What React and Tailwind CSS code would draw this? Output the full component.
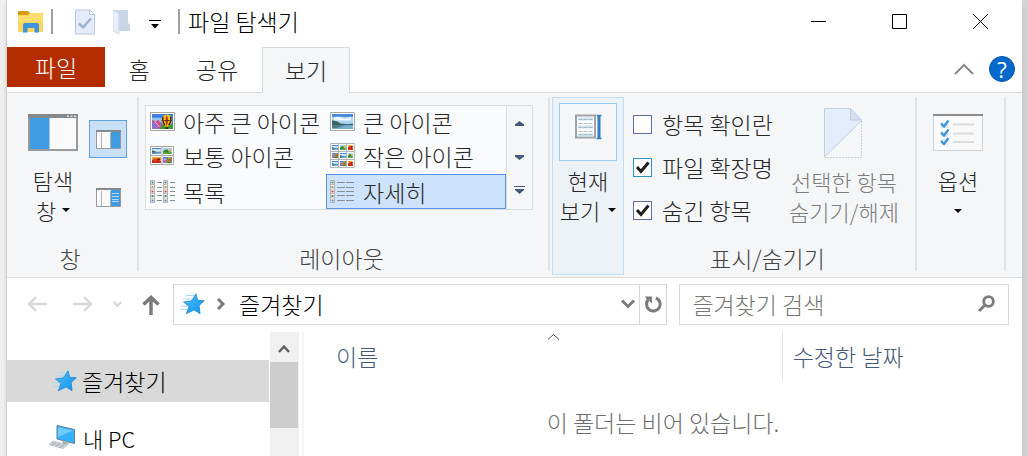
import { useState } from 'react'

const FolderIcon = () => (
  <svg width="25" height="22" viewBox="0 0 25 22">
    <path d="M0 1q0-1 1-1h9l2 2v3H0z" fill="#d99a0b" />
    <path d="M0 4h10l2-2h12q1 0 1 1v17q0 1-1 1H1q-1 0-1-1z" fill="#ffd55c" />
    <path d="M12 2h12q1 0 1 1v8H0V5h10z" fill="#ffdc70" />
    <path d="M5 21.500V14q0-2 2-2h12q2 0 2 2v7.500h-4.500V17h-7v4.500z" fill="#3b94dd" />
  </svg>
)

const PropertiesIcon = () => (
  <svg width="20" height="26" viewBox="0 0 20 26">
    <path d="M.5 1h14l5 4.500v19.500H.5z" fill="#e3ecf8" stroke="#b9c8de" />
    <path d="M14.500 1v4.500h5z" fill="#fff" stroke="#b9c8de" />
    <path d="M4 14.500l4 4 8-9" fill="none" stroke="#9fb1cd" strokeWidth="2.500" />
  </svg>
)

const NewFolderIcon = () => (
  <svg width="17" height="25" viewBox="0 0 17 25">
    <path d="M0 1h15v13l2 2v6H5z" fill="#c9d6e8" />
    <path d="M0 1l6 3v21l-6-3z" fill="#e6eef9" stroke="#c3d1e4" strokeWidth=".6" />
  </svg>
)

const Caret = ({ className = '' }) => (
  <svg className={className} width="8" height="4" viewBox="0 0 8 4" fill="currentColor">
    <path d="M0 0h8L4 4z" />
  </svg>
)

const ScrollCaret = ({ className = '' }) => (
  <svg className={className} width="9" height="5" viewBox="0 0 9 5" fill="currentColor">
    <path d="M0 0h9v1.500L4.500 5 0 1.500z" />
  </svg>
)

const PaneIcon = () => (
  <svg width="50" height="37" viewBox="0 0 50 37">
    <path d="M1 1h48v35H1z" fill="#fafafa" stroke="#989b9e" strokeWidth="2" />
    <path d="M0 0h50v4H0z" fill="#85898b" />
    <path d="M39 1.500h2v1.500h-2zM42.500 1.500h2v1.500h-2zM46 1.500h2v1.500h-2z" fill="#ddd" />
    <path d="M2 4h19v31H2z" fill="#3f9be2" />
    <path d="M21 4h1v31h-1z" fill="#9fcbee" />
  </svg>
)

const SmallPaneIcon = ({ lines }) => (
  <svg width="25" height="19" viewBox="0 0 25 19">
    <path d="M.5.5h24v18H.5z" fill="#fafafa" stroke="#989b9e" />
    <path d="M0 0h25v2H0z" fill="#85898b" />
    <path d="M5.500 3v15M14.500 3v15" stroke="#b0b2b4" />
    <path d="M15 2h9v16h-9z" fill="#3f9be2" />
    {lines && <path d="M16 5.500h7M16 8.500h7M16 11.500h7M16 13.500h7" stroke="#b3d8f6" />}
  </svg>
)

const Landscape = ({ x = 0, y = 0, w, h }) => (
  <svg x={x} y={y} width={w} height={h} viewBox="0 0 22 16" preserveAspectRatio="none">
    <path d="M0 0h22v16H0z" fill="#4787dc" />
    <path d="M0 3h22v8H0z" fill="#a8d3f3" />
    <path d="M2 4q4-2 8 0t10-1v4H2z" fill="#eef8fd" />
    <path d="M0 7q4-1 9 3l8 1 5-1v2H0z" fill="#3a665f" />
    <path d="M0 12h22v4H0z" fill="#78b0cc" />
    <path d="M0 12h14l-9 3H0z" fill="#4a7b86" />
  </svg>
)

const Balloon = ({ x = 0, y = 0, w, h }) => (
  <svg x={x} y={y} width={w} height={h} viewBox="0 0 22 16" preserveAspectRatio="none">
    <path d="M0 0h22v16H0z" fill="#3f7fe4" />
    <path d="M0 4h11v5H0z" fill="#8fc6f6" />
    <path d="M0 16V6l4 2 3-2 5 10z" fill="#d6507d" />
    <path d="M0 9l3-1 5 8H0z" fill="#8f6fd0" />
    <path d="M3 8l5 6" stroke="#f2b0b8" />
    <path d="M7 16l4-4 11-1v5z" fill="#3f9b34" />
    <ellipse cx="15.500" cy="7" rx="5.500" ry="6.500" fill="#f5c510" />
    <path d="M15.500 1q-2.500 6 0 12q2.500-6 0-12z" fill="#c62a18" />
    <path d="M11.500 3q-1 5 2 9M19.500 3q1 5-2 9" fill="none" stroke="#3b2416" strokeWidth="1.500" />
    <path d="M10 7h11" stroke="#6b3417" />
    <path d="M14 14h3v2h-3z" fill="#4b2b12" />
  </svg>
)

const Flowers = ({ x, y, w, h, red }) => (
  <svg x={x} y={y} width={w} height={h} viewBox="0 0 8 8" preserveAspectRatio="none">
    <path d="M0 0h8v8H0z" fill={red ? '#f0a63c' : '#a9d6ef'} />
    <path d="M0 4l4-2 4 4v2H0z" fill={red ? '#c92b17' : '#5aa646'} />
    <circle cx="3" cy="4" r="2" fill={red ? '#e23b1e' : '#2f7f3a'} />
    <circle cx="6" cy="3" r="1.500" fill={red ? '#8c1b12' : '#f0b53a'} />
  </svg>
)

const HugeIcon = () => (
  <svg width="25" height="25" viewBox="0 0 25 25">
    <path d="M.5 3.500h24v18H.5z" fill="#fff" stroke="#a6a6a6" />
    <Balloon x={2} y={5} w={21} h={15} />
  </svg>
)

const LargeIcon = () => (
  <svg width="25" height="25" viewBox="0 0 25 25">
    <path d="M.5 3.500h24v18H.5z" fill="#fff" stroke="#a6a6a6" />
    <Landscape x={2} y={5} w={21} h={15} />
  </svg>
)

const MediumIcon = () => (
  <svg width="25" height="25" viewBox="0 0 25 25">
    <path d="M.5 3.500h23v18H.5z" fill="#fff" stroke="#a6a6a6" />
    <path d="M12 3v19M0 12.500h24" stroke="#a6a6a6" />
    <Landscape x={2} y={5} w={9} h={6} />
    <Flowers x={13} y={5} w={9} h={6} />
    <Flowers x={2} y={14} w={9} h={6} red />
    <Balloon x={13} y={14} w={9} h={6} />
  </svg>
)

const SmallIcon = () => (
  <svg width="25" height="25" viewBox="0 0 25 25">
    <path d="M.5.5h24v24H.5z" fill="#fff" stroke="#b5b5b5" />
    <path d="M8.500 0v25M16.500 0v25M0 8.500h25M0 16.500h25" stroke="#b5b5b5" />
    <Landscape x={2} y={2} w={6} h={5} />
    <Flowers x={10} y={2} w={6} h={5} />
    <Flowers x={18} y={2} w={5} h={5} red />
    <Balloon x={2} y={10} w={6} h={5} />
    <Landscape x={10} y={10} w={6} h={5} />
    <Flowers x={18} y={10} w={5} h={5} />
    <Landscape x={2} y={18} w={6} h={5} />
    <Balloon x={10} y={18} w={6} h={5} />
    <Flowers x={18} y={18} w={5} h={5} red />
  </svg>
)

const DOTS = ['#3d9070', '#b59a5a', '#d24a35', '#5b8a72', '#4a7fc0']

const FileStrip = ({ x }) => (
  <g>
    <path d={`M${x + 0.5} .5h4v22h-4z`} fill="#fff" stroke="#b0b0b0" />
    {DOTS.map((color, i) => (
      <g key={color}>
        <rect x={x + 1.5} y={1.5 + i * 4.5} width="2" height="2" fill={color} />
        <path d={`M${x} ${4.5 + i * 4.5}h5`} stroke="#b8b8b8" />
      </g>
    ))}
  </g>
)

const ListIcon = () => (
  <svg width="25" height="23" viewBox="0 0 25 23">
    <FileStrip x={0} />
    <FileStrip x={13} />
    <path
      d="M7 2.500h5M7 7.500h5M7 11.500h5M7 15.500h5M7 20.500h5M20 2.500h5M20 7.500h5M20 11.500h5M20 15.500h5M20 20.500h5"
      stroke="#8d8d8d"
    />
  </svg>
)

const DetailsIcon = () => (
  <svg width="25" height="23" viewBox="0 0 25 23">
    <FileStrip x={0} />
    <path
      d="M7 2.500h8M7 7.500h8M7 11.500h8M7 15.500h8M7 20.500h8M16 2.500h8M16 7.500h8M16 11.500h8M16 15.500h8M16 20.500h8"
      stroke="#87919e"
    />
  </svg>
)

const CurrentViewIcon = () => (
  <svg width="27" height="26" viewBox="0 0 27 26">
    <path d="M1 1.500h19v22H1z" fill="#fff" stroke="#a0a3a5" strokeWidth="2" />
    <path d="M3 5h15M3 13h15M3 21h15" stroke="#c4e4f3" strokeWidth="3" />
    <path
      d="M3.500 5.500h14M3.500 9.500h14M3.500 13.500h14M3.500 17.500h14M3.500 20.500h14"
      stroke="#b3babe"
      strokeDasharray="4 1"
    />
    <path d="M24 2v22" stroke="#2f80c3" strokeWidth="3" />
    <path d="M21.500 1.500h5M21.500 24.500h5" stroke="#2f80c3" strokeWidth="1.500" />
  </svg>
)

const HideIcon = () => (
  <svg width="39" height="50" viewBox="0 0 39 50">
    <path d="M.5 49V.5h26l11 12z" fill="#e3edfb" stroke="#c2cfdf" />
    <path d="M26.500.5v11.500h11z" fill="#d3e0f0" stroke="#c2cfdf" />
    <path d="M37.500 13v36.500H1" fill="none" stroke="#cdcfd1" strokeDasharray="2 1" />
  </svg>
)

const OptionsIcon = () => (
  <svg width="50" height="37" viewBox="0 0 50 37">
    <path d="M.5.5h49v36H.5z" fill="#fafafa" stroke="#cfd1d3" />
    <path d="M0 0h50v2H0z" fill="#8b8e90" />
    <path d="M8 8h7v6H8zM8 17h7v6H8zM8 25h7v6H8z" fill="#e9e9e9" />
    <path d="M20 10.500h21M20 19.500h21M20 28h21" stroke="#dcdcdc" strokeWidth="2" />
    <path d="M8 9.500l3 3 4.500-6M8 18.500l3 3 4.500-6M8 27l3 3 4.500-6" fill="none" stroke="#3795e3" strokeWidth="2.200" />
  </svg>
)

const StarIcon = () => (
  <svg className="shrink-0" width="25" height="22" viewBox="0 0 25 22">
    <defs>
      <linearGradient id="star" x1="0" y1="0" x2="1" y2="1">
        <stop offset="0" stopColor="#55c3ff" />
        <stop offset="1" stopColor="#0c8fe6" />
      </linearGradient>
    </defs>
    <path d="M6 2.500h9M3 6h9M1 13h8M0 16.500h7" stroke="#a9dbf9" />
    <path
      d="M16 .8l1.800 6.500 6.500.4-5.200 4.800 1 8.200-6-3.700-7.800 3.700 2.700-7.300L3.500 9l8-1.200z"
      fill="url(#star)"
      stroke="#1583cf"
      strokeWidth=".7"
    />
  </svg>
)

const ComputerIcon = () => (
  <svg className="shrink-0" width="26" height="24" viewBox="0 0 26 24">
    <path d="M8 .5l17.500 4v14L8 14z" fill="#35b2fb" stroke="#5f7f95" />
    <path d="M9 2l15 3.500L9 12z" fill="#6ccbff" />
    <path d="M14 15.500l6 1.500-1 3-6-1.500z" fill="#a9b4bb" />
    <path d="M4 16l14 4-4 3.500-14-4z" fill="#dde1e4" stroke="#a5adb3" strokeWidth=".7" />
    <path d="M3 17.500l13 3.500M2 18.700l13 3.500M7 17l-4 3M11 18l-4 3.500M15 19l-4 4" stroke="#a5adb3" strokeWidth=".7" />
  </svg>
)

const CheckRow = ({ label, checked, onChange, highlight }) => (
  <label className="flex h-[43px] items-center gap-2.5 whitespace-nowrap">
    <span className="grid shrink-0">
      <input
        type="checkbox"
        checked={checked}
        onChange={onChange}
        className={`col-start-1 row-start-1 h-[19px] w-[19px] appearance-none border bg-white ${
          highlight ? 'border-[#2a94cf]' : 'border-[#5a71a6]'
        }`}
      />
      {checked && (
        <svg className="pointer-events-none col-start-1 row-start-1" width="19" height="19" viewBox="0 0 19 19">
          <path d="M4 9l4 4.500 7.500-9" fill="none" stroke="#1f1f1f" strokeWidth="3" />
        </svg>
      )}
    </span>
    <span className="pb-0.5">{label}</span>
  </label>
)

const Separator = () => <div className="mt-1 mb-1.5 w-0.5 shrink-0 bg-[#e2e4e6]" />

const GroupLabel = ({ children }) => (
  <p className="h-9 pr-1 text-center leading-[34px] text-[#444]">{children}</p>
)

const LAYOUTS = [
  { name: '아주 큰 아이콘', Icon: HugeIcon },
  { name: '큰 아이콘', Icon: LargeIcon },
  { name: '보통 아이콘', Icon: MediumIcon },
  { name: '작은 아이콘', Icon: SmallIcon },
  { name: '목록', Icon: ListIcon },
  { name: '자세히', Icon: DetailsIcon }
]

const TitleBar = () => (
  <header className="flex h-[47px] shrink-0 items-center pr-[34px] pl-[11px] text-black">
    <div className="flex h-full items-center pb-1">
      <FolderIcon />
      <span className="ml-2 h-[25px] w-0.5 bg-[#a0a0a0]" />
      <button aria-label="속성" className="ml-[22px]"><PropertiesIcon /></button>
      <button aria-label="새 폴더" className="ml-[18px]"><NewFolderIcon /></button>
      <button aria-label="빠른 실행 도구 모음 사용자 지정" className="ml-[19px] pt-1.5">
        <svg width="12" height="9" viewBox="0 0 12 9">
          <path d="M0 0h12v1H0zM2 4h8L6 8.500z" />
        </svg>
      </button>
      <span className="ml-[17px] h-[25px] w-0.5 bg-[#a0a0a0]" />
      <h1 className="ml-2 pb-0.5 whitespace-nowrap">파일 탐색기</h1>
    </div>
    <div className="ml-auto flex items-center gap-[66px] pb-1">
      <button aria-label="최소화">
        <svg width="15" height="15" viewBox="0 0 15 15"><path d="M0 7.500h15" stroke="#000" /></svg>
      </button>
      <button aria-label="최대화">
        <svg width="15" height="15" viewBox="0 0 15 15"><path d="M.5.5h14v14H.5z" fill="none" stroke="#000" /></svg>
      </button>
      <button aria-label="닫기">
        <svg width="15" height="15" viewBox="0 0 15 15"><path d="M0 0l15 15M15 0L0 15" stroke="#000" /></svg>
      </button>
    </div>
  </header>
)

const Tabs = () => (
  <nav className="flex h-[46px] shrink-0 items-start border-b border-[#d9dbdd]">
    <button className="h-10 w-[98px] bg-[#b32d00] text-white">파일</button>
    <button className="h-[45px] w-[68px] pb-0.5">홈</button>
    <button className="h-[45px] w-[88px] pb-0.5">공유</button>
    <button className="ml-px h-[46px] w-[88px] border border-b-0 border-[#d9dbdd] bg-[#f4f6f8] pb-0.5">보기</button>
    <div className="ml-auto flex h-[45px] items-center gap-[15px] pr-[7px] pb-0.5">
      <button aria-label="리본 최소화">
        <svg width="20" height="12" viewBox="0 0 20 12">
          <path d="M1 11l9-9 9 9" fill="none" stroke="#8a8a8a" strokeWidth="2" />
        </svg>
      </button>
      <button
        aria-label="도움말"
        className="h-[26px] w-[26px] rounded-full border border-[#0a56a5] bg-[#0469cb] font-['Open_Sans',sans-serif] text-[22px] leading-[22px] font-normal text-white"
      >
        ?
      </button>
    </div>
  </nav>
)

const Ribbon = () => {
  const [layout, setLayout] = useState('자세히')
  const [options, setOptions] = useState({ boxes: false, extensions: true, hidden: true })
  const toggle = (key) => setOptions({ ...options, [key]: !options[key] })

  return (
    <section className="flex h-[185px] shrink-0 border-b border-[#d9dbdd] bg-[#f4f6f8]">
      {/* Panes */}
      <div className="flex w-[130px] shrink-0 flex-col">
        <div className="flex flex-1 items-start pl-5">
          <button className="flex w-[52px] flex-col items-center pt-[21px] text-[22px]">
            <PaneIcon />
            <span className="mt-3.5 leading-[30px]">탐색</span>
            <span className="flex items-center gap-1.5 leading-[30px]">
              창 <Caret className="text-black" />
            </span>
          </button>
          <div className="flex flex-col gap-5 pt-[27px] pl-2.5">
            <button aria-label="미리 보기 창" className="flex h-[38px] w-[38px] items-center justify-center border border-[#62a2e4] bg-[#c9e0f7]">
              <SmallPaneIcon />
            </button>
            <button aria-label="세부 정보 창" className="flex h-[38px] w-[38px] items-center justify-center">
              <SmallPaneIcon lines />
            </button>
          </div>
        </div>
        <GroupLabel>창</GroupLabel>
      </div>
      <Separator />

      {/* Layout */}
      <div className="flex w-[409px] shrink-0 flex-col">
        <div className="flex flex-1 items-start pt-3 pl-1.5">
          <div className="grid grid-cols-[180px_180px] grid-rows-[31px_37px_35px] border border-[#dcdee0] bg-[#fafbfd]">
            {LAYOUTS.map(({ name, Icon }) => (
              <button
                key={name}
                onClick={() => setLayout(name)}
                className={`flex items-center gap-2 border pl-[3px] whitespace-nowrap ${
                  layout === name ? 'border-[#5597e0] bg-[#cde2fb]' : 'border-transparent'
                }`}
              >
                <Icon />
                <span className="leading-7">{name}</span>
              </button>
            ))}
          </div>
          <div className="flex flex-col border border-l-0 border-[#dcdee0] text-[#44597a]">
            <button aria-label="위로" className="flex h-[34px] w-[25px] items-center justify-center">
              <ScrollCaret className="rotate-180" />
            </button>
            <button aria-label="아래로" className="flex h-[34px] w-[25px] items-center justify-center"><ScrollCaret /></button>
            <button aria-label="자세히 보기" className="flex h-[35px] w-[25px] items-center justify-center pb-1">
              <svg width="11" height="8" viewBox="0 0 11 8" fill="currentColor">
                <path d="M0 0h11v1H0zM1 3h9v1L5.500 8 1 4z" />
              </svg>
            </button>
          </div>
        </div>
        <GroupLabel>레이아웃</GroupLabel>
      </div>
      <Separator />

      {/* Current view */}
      <button className="mt-1 mb-0.5 ml-0.5 flex w-[72px] shrink-0 flex-col items-center border border-[#c0dff6] bg-[#edf2f6] pt-[5px] text-[22px]">
        <span className="flex h-[58px] w-[58px] justify-center border border-[#99cbf5] bg-[#f4f6f8] pt-2.5">
          <CurrentViewIcon />
        </span>
        <span className="mt-1 leading-[30px]">현재</span>
        <span className="flex items-center gap-2 leading-[30px] whitespace-nowrap">
          보기 <Caret className="text-black" />
        </span>
      </button>

      {/* Show / hide */}
      <div className="flex w-[291px] shrink-0 flex-col">
        <div className="flex flex-1 items-start gap-[15px] pl-[9px]">
          <div className="w-[141px] pt-2.5">
            <CheckRow label="항목 확인란" checked={options.boxes} onChange={() => toggle('boxes')} />
            <CheckRow label="파일 확장명" checked={options.extensions} onChange={() => toggle('extensions')} highlight />
            <CheckRow label="숨긴 항목" checked={options.hidden} onChange={() => toggle('hidden')} />
          </div>
          <button disabled className="flex flex-col items-center pt-[15px] text-[22px] whitespace-nowrap text-[#7d7d7d]">
            <HideIcon />
            <span className="mt-2 leading-[30px]">선택한 항목</span>
            <span className="leading-[30px]">숨기기/해제</span>
          </button>
        </div>
        <GroupLabel>표시/숨기기</GroupLabel>
      </div>
      <Separator />

      {/* Options */}
      <button className="flex w-[87px] shrink-0 flex-col items-center pt-[21px] pr-[5px] text-[22px]">
        <OptionsIcon />
        <span className="mt-3.5 leading-[30px]">옵션</span>
        <Caret className="mt-3.5 text-black" />
      </button>
      <Separator />
    </section>
  )
}

const AddressBar = () => (
  <div className="flex h-[54px] shrink-0 items-center pr-[13px] pb-0.5 pl-5 text-[#7d7d7d]">
    <div className="flex w-[146px] shrink-0 items-center">
      <button aria-label="뒤로">
        <svg width="20" height="16" viewBox="0 0 20 16"><path d="M9 1L2 8l7 7M2 8h18" fill="none" stroke="#dadada" strokeWidth="2.500" /></svg>
      </button>
      <button aria-label="앞으로" className="ml-[26px]">
        <svg width="20" height="16" viewBox="0 0 20 16"><path d="M11 1l7 7-7 7M18 8H0" fill="none" stroke="#dadada" strokeWidth="2.500" /></svg>
      </button>
      <button aria-label="최근 위치" className="ml-5">
        <svg width="9" height="7" viewBox="0 0 9 7"><path d="M.8 1l3.700 4L8.200 1" fill="none" stroke="#d6d6d6" strokeWidth="2" /></svg>
      </button>
      <button aria-label="위로 이동" className="ml-5 pt-0.5">
        <svg width="18" height="20" viewBox="0 0 18 20"><path d="M1.500 9.500L9 2.500l7.500 7M9 2.500v17.500" fill="none" stroke="#7b7b7b" strokeWidth="3.500" /></svg>
      </button>
    </div>
    <div className="grid min-w-0 flex-1 grid-cols-[3fr_2fr] gap-3">
      <div className="flex h-[41px] min-w-0 border border-[#d9d9d9]">
        <div className="flex min-w-0 flex-1 items-center pl-1.5">
          <StarIcon />
          <svg className="ml-3 shrink-0" width="8" height="12" viewBox="0 0 8 12">
            <path d="M1 1l5 5-5 5" fill="none" stroke="#777" strokeWidth="3" />
          </svg>
          <span className="ml-[14px] whitespace-nowrap text-black">즐겨찾기</span>
          <button aria-label="이전 위치" className="mr-1 ml-auto">
            <svg width="14" height="10" viewBox="0 0 14 10">
              <path d="M1 1.500l6 6 6-6" fill="none" stroke="#7b7b7b" strokeWidth="3" />
            </svg>
          </button>
        </div>
        <button aria-label="새로 고침" className="flex w-[27px] items-center justify-center border-l border-[#d9d9d9]">
          <svg width="18" height="18" viewBox="0 0 18 18">
            <path d="M12 3a6.800 6.800 0 1 1-7 1" fill="none" stroke="#7b7b7b" strokeWidth="3" />
            <path d="M1 1.500h7v7l-2.500-2.500V4H2.500z" fill="#7b7b7b" />
          </svg>
        </button>
      </div>
      <div className="flex h-[41px] min-w-0 items-center border border-[#d9d9d9] pr-[13px] pl-3">
        <input
          type="text"
          aria-label="즐겨찾기 검색"
          placeholder="즐겨찾기 검색"
          className="min-w-0 flex-1 bg-transparent outline-none placeholder:text-[#767676]"
        />
        <svg className="shrink-0" width="17" height="18" viewBox="0 0 17 18">
          <circle cx="10.500" cy="6.500" r="4.800" fill="none" stroke="#7b7b7b" strokeWidth="2.800" />
          <path d="M7 10l-6 6" stroke="#7b7b7b" strokeWidth="3" />
        </svg>
      </div>
    </div>
  </div>
)

const Explorer = () => (
  <div className="flex min-h-0 flex-1">
    <aside className="flex w-[263px] shrink-0 flex-col gap-[15px] pt-7 pr-px text-black">
      <a href="#favorites" className="flex h-[42px] shrink-0 items-center gap-[5px] bg-[#d9d9d9] pl-[45px]">
        <StarIcon />
        <span>즐겨찾기</span>
      </a>
      <a href="#pc" className="flex h-[42px] shrink-0 items-center gap-2 pb-0.5 pl-[42px]">
        <ComputerIcon />
        <span className="pt-0.5 text-[22px]">내 PC</span>
      </a>
    </aside>
    <div className="flex w-[29px] shrink-0 flex-col bg-[#f0f0f0] pr-px">
      <button aria-label="위로 스크롤" className="flex h-[30px] shrink-0 items-center justify-center pt-0.5">
        <svg width="12" height="9" viewBox="0 0 12 9"><path d="M1 8l5-5.500L11 8" fill="none" stroke="#606060" strokeWidth="2.500" /></svg>
      </button>
      <div className="h-[66px] shrink-0 bg-[#cdcdcd]" />
    </div>
    <main className="ml-[3px] min-w-0 flex-1 border-l-2 border-[#f5f5f5]">
      <div className="grid h-12 grid-cols-[2fr_1fr] text-[#44597a]">
        <button className="flex flex-col border-r border-[#e5e5e5] pl-8 text-left">
          <svg className="mt-0.5 mr-2.5 self-center" width="11" height="6" viewBox="0 0 11 6">
            <path d="M0 5.500L5.500.5l5.500 5" fill="none" stroke="#555" />
          </svg>
          <span className="leading-8">이름</span>
        </button>
        <button className="pl-2.5 text-left leading-8 whitespace-nowrap">수정한 날짜</button>
      </div>
      <p className="pt-6 text-center text-[#6d6d6d]">이 폴더는 비어 있습니다.</p>
    </main>
  </div>
)

const App = () => (
  <div className="h-screen overflow-hidden bg-linear-to-r from-[#efefef] to-[#d4d4d4] pr-1.5 pl-1.5 font-['Noto_Sans_CJK_KR',sans-serif] text-[23px] leading-9 font-light text-[#262626]">
    <div className="flex h-full flex-col border-l border-[#d0d0d0] bg-white shadow-md">
      <TitleBar />
      <Tabs />
      <Ribbon />
      <AddressBar />
      <Explorer />
    </div>
  </div>
)

export default App
